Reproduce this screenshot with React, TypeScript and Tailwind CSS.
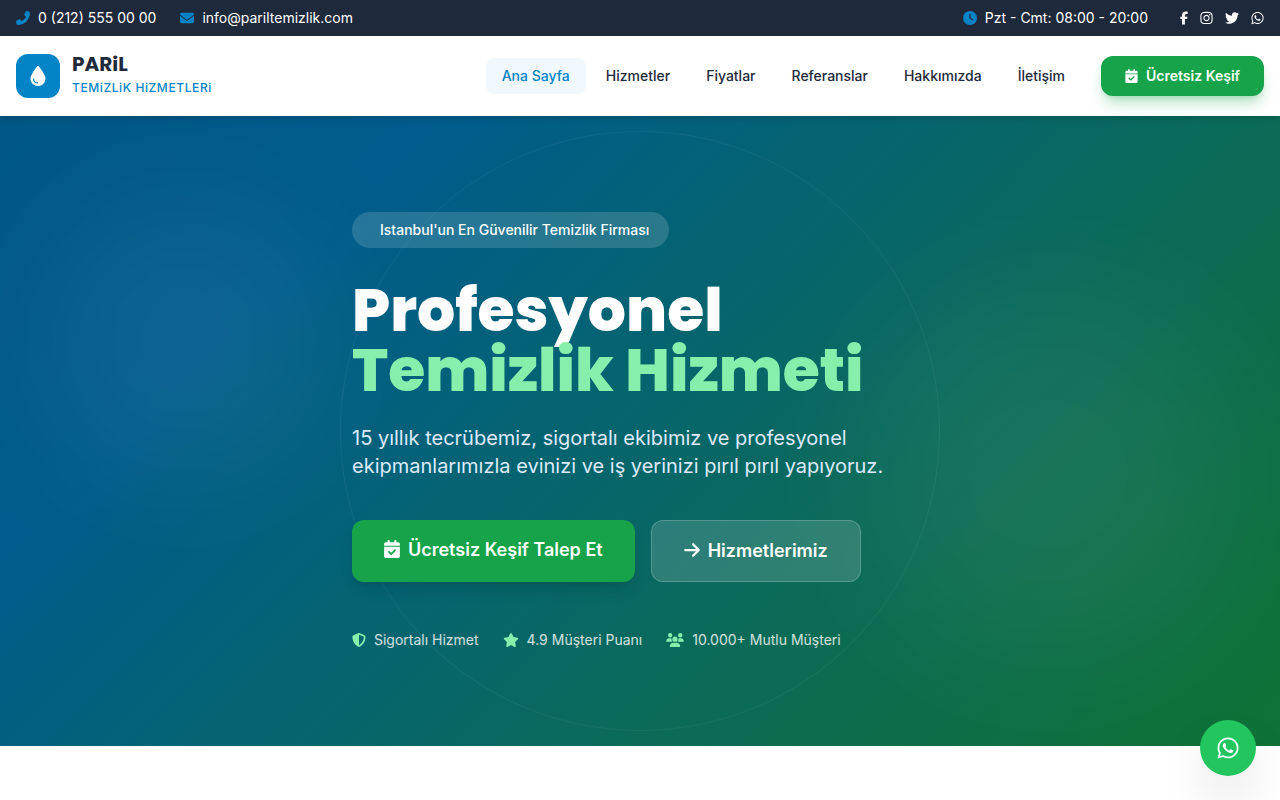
import { ReactNode } from "react";
import {
  FaArrowRight,
  FaCalendarCheck,
  FaClock,
  FaDroplet,
  FaEnvelope,
  FaFacebookF,
  FaInstagram,
  FaPhone,
  FaShieldHalved,
  FaStar,
  FaTwitter,
  FaUsers,
  FaWhatsapp,
} from "react-icons/fa6";
import { clsx } from "clsx";

const NAV_ITEMS = ["Ana Sayfa", "Hizmetler", "Fiyatlar", "Referanslar", "Hakkımızda", "İletişim"];

const SOCIALS = [
  { label: "Facebook", icon: <FaFacebookF className="h-3.5 w-2" /> },
  { label: "Instagram", icon: <FaInstagram className="h-3.5 w-[13px]" /> },
  { label: "Twitter", icon: <FaTwitter className="size-3.5" /> },
  { label: "WhatsApp", icon: <FaWhatsapp className="h-3.5 w-[13px]" /> },
];

const TopBar = () => (
  <div className="bg-[#1e293b] text-sm text-white">
    <div className="mx-auto flex max-w-7xl items-center justify-between px-4 py-2">
      <div className="flex items-center gap-6">
        <a href="tel:02125550000" className="flex items-center gap-2">
          <FaPhone className="size-3.5 -scale-x-100 text-[#0284c7]" />
          0 (212) 555 00 00
        </a>
        <a href="mailto:info@pariltemizlik.com" className="flex items-center gap-2">
          <FaEnvelope className="size-3.5 text-[#0284c7]" />
          info@pariltemizlik.com
        </a>
      </div>
      <div className="flex items-center gap-8">
        <span className="flex items-center gap-2">
          <FaClock className="size-3.5 text-[#0284c7]" />
          Pzt - Cmt: 08:00 - 20:00
        </span>
        <div className="flex items-center gap-3">
          {SOCIALS.map(({ label, icon }) => (
            <a key={label} href="#" aria-label={label}>
              {icon}
            </a>
          ))}
        </div>
      </div>
    </div>
  </div>
);

const Header = () => (
  <header className="relative z-10 bg-white shadow-md">
    <div className="mx-auto flex h-20 max-w-7xl items-center justify-between px-4">
      <a href="#" className="flex items-center gap-3">
        <span className="flex size-11 items-center justify-center rounded-xl bg-[#0284c7] text-white">
          <FaDroplet className="h-5 w-4" />
        </span>
        <span className="flex flex-col pb-1">
          <span className="font-['Poppins','Inter',sans-serif] text-xl leading-7 font-bold text-[#1e293b]">
            PARiL
          </span>
          <span className="text-xs leading-5 font-medium tracking-wider text-[#0284c7]">
            TEMiZLiK HiZMETLERi
          </span>
        </span>
      </a>
      <div className="flex items-center gap-5">
        <nav className="flex items-center gap-1">
          {NAV_ITEMS.map((item, index) => (
            <a
              key={item}
              href="#"
              className={clsx(
                "rounded-lg px-4 py-2 text-sm font-medium",
                index === 0 ? "bg-[#f0f9ff] text-[#0284c7]" : "text-[#1e293b]",
              )}
            >
              {item}
            </a>
          ))}
        </nav>
        <a
          href="#"
          className="flex items-center gap-2 rounded-xl bg-[#16a34a] px-6 py-2.5 text-sm font-semibold text-white shadow-lg shadow-[#16a34a]/30"
        >
          <FaCalendarCheck className="h-3.5 w-[13px]" />
          Ücretsiz Keşif
        </a>
      </div>
    </div>
  </header>
);

const TrustItem = ({ icon, children }: { icon: ReactNode; children: ReactNode }) => (
  <li className="flex items-center gap-2">
    <span className="text-[#86efac]">{icon}</span>
    {children}
  </li>
);

const Hero = () => (
  <section className="relative overflow-hidden bg-[linear-gradient(135deg,#005785_0%,#005c8c_23%,#0a6a5a_64%,#0f7234_100%)] px-4 py-24">
    {/* soft lights and the ring behind the content */}
    <div className="absolute top-20 left-10 size-72 rounded-full bg-white/5 blur-3xl" />
    <div className="absolute right-10 bottom-20 size-96 rounded-full bg-white/5 blur-3xl" />
    <div className="absolute top-1/2 left-1/2 size-[600px] -translate-x-1/2 -translate-y-1/2 rounded-full border border-white/5" />

    <div className="relative mx-auto max-w-xl">
      <span className="inline-block rounded-full bg-white/15 py-2 pr-5 pl-7 align-top text-sm font-medium text-white">
        Istanbul'un En Güvenilir Temizlik Firması
      </span>
      <h1 className="mt-8 font-['Poppins','Inter',sans-serif] text-6xl leading-none font-extrabold text-white">
        Profesyonel
        <span className="block text-[#86efac]">Temizlik Hizmeti</span>
      </h1>
      <p className="mt-6 text-xl text-[#dbeafe]">
        15 yıllık tecrübemiz, sigortalı ekibimiz ve profesyonel ekipmanlarımızla evinizi ve iş
        yerinizi pırıl pırıl yapıyoruz.
      </p>
      <div className="mt-10 flex gap-4 text-lg font-semibold text-white">
        <a
          href="#"
          className="flex items-start gap-2 rounded-xl bg-[#16a34a] px-8 py-4 shadow-lg"
        >
          <FaCalendarCheck className="mt-1 h-[18px] w-4" />
          Ücretsiz Keşif Talep Et
        </a>
        <a
          href="#"
          className="flex items-start gap-2 rounded-xl border border-white/20 bg-white/15 px-8 py-4"
        >
          <FaArrowRight className="mt-1 h-[18px] w-4" />
          Hizmetlerimiz
        </a>
      </div>
      <ul className="mt-12 flex gap-6 text-sm text-white/80">
        <TrustItem icon={<FaShieldHalved className="size-3.5" />}>Sigortalı Hizmet</TrustItem>
        <TrustItem icon={<FaStar className="h-3.5 w-4" />}>4.9 Müşteri Puanı</TrustItem>
        <TrustItem icon={<FaUsers className="h-3.5 w-[18px]" />}>10.000+ Mutlu Müşteri</TrustItem>
      </ul>
    </div>
  </section>
);

const App = () => (
  <div className="min-h-screen bg-white font-['Inter',sans-serif]">
    <TopBar />
    <Header />
    <main>
      <Hero />
    </main>
    <a
      href="#"
      aria-label="WhatsApp"
      className="fixed right-6 bottom-6 z-20 flex size-14 items-center justify-center rounded-full bg-[#22c55e] text-white shadow-2xl"
    >
      <FaWhatsapp className="h-6 w-[22px]" />
    </a>
  </div>
);

export default App;
